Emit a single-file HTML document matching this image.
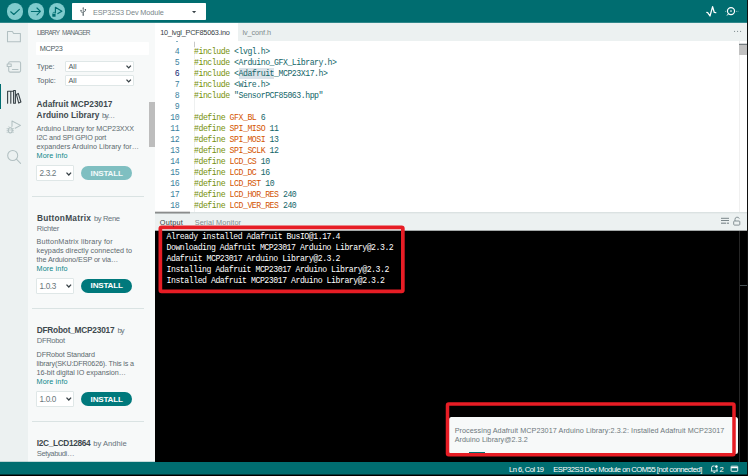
<!DOCTYPE html>
<html>
<head>
<meta charset="utf-8">
<title>Arduino IDE</title>
<style>
*{margin:0;padding:0;box-sizing:border-box;}
html,body{width:748px;height:476px;overflow:hidden;background:#fff;font-family:"Liberation Sans",sans-serif;}
#root{position:relative;width:748px;height:476px;overflow:hidden;}
.t{position:absolute;white-space:pre;}
svg{position:absolute;overflow:visible;}
</style>
</head>
<body>
<div id="root">
<div style="position:absolute;left:0px;top:0px;width:748px;height:23px;background:#006d70;"></div>
<div style="position:absolute;left:0px;top:23px;width:28px;height:439px;background:#ecf1f1;"></div>
<div style="position:absolute;left:28px;top:23px;width:127px;height:439px;background:#f7f9f9;"></div>
<div style="position:absolute;left:155px;top:23px;width:593px;height:18px;background:#ecf1f1;"></div>
<div style="position:absolute;left:155px;top:23px;width:83px;height:18px;background:#fff;"></div>
<div style="position:absolute;left:155px;top:41px;width:593px;height:172px;background:#fff;"></div>
<div style="position:absolute;left:155px;top:213px;width:593px;height:18px;background:#ecf1f1;"></div>
<div style="position:absolute;left:155px;top:212px;width:593px;height:1px;background:#dbe2e2;"></div>
<div style="position:absolute;left:155px;top:213px;width:593px;height:1px;background:#e6ebeb;"></div>
<div style="position:absolute;left:155px;top:212px;width:35px;height:1px;background:#8a8c8c;"></div>
<div style="position:absolute;left:155px;top:213px;width:35px;height:1px;background:#b4b9b9;"></div>
<div style="position:absolute;left:155px;top:211px;width:35px;height:1px;background:#d9dada;"></div>
<div style="position:absolute;left:155px;top:230px;width:593px;height:1px;background:#a4a8a8;"></div>
<div style="position:absolute;left:155px;top:231px;width:593px;height:231px;background:#000;"></div>
<div style="position:absolute;left:0px;top:462px;width:748px;height:14px;background:#006d70;"></div>
<div style="position:absolute;left:0px;top:461px;width:28px;height:1px;background:#bdd3d4;"></div>
<div style="position:absolute;left:28px;top:461px;width:127px;height:1px;background:#c6dadb;"></div>
<div style="position:absolute;left:0px;top:22px;width:748px;height:1px;background:#2f878a;"></div>
<div style="position:absolute;left:6.9px;top:3.4px;width:16.2px;height:16.2px;background:#7fcbcd;border-radius:50%;"></div>
<div style="position:absolute;left:27.85px;top:3.4px;width:16.2px;height:16.2px;background:#7fcbcd;border-radius:50%;"></div>
<div style="position:absolute;left:48.65px;top:3.4px;width:16.2px;height:16.2px;background:#7fcbcd;border-radius:50%;"></div>
<svg style="left:0;top:0" width="70" height="23" viewBox="0 0 70 23" fill="none" stroke="#006d70" stroke-width="1.15" stroke-linecap="round" stroke-linejoin="round"><path d="M10.7 11.8 L13.8 14.5 L19.4 9.4"/><path d="M31.4 11.45 H40.2 M37 8 L40.4 11.45 L37 14.9"/><path d="M55.4 12.6 V7.3 L61.9 11.2 L57.9 13.6"/><rect x="52.3" y="13.9" width="3.3" height="2.9" rx="0.6" fill="#006d70" stroke="none"/><path d="M53 13.9 V13.2 a1 1 0 0 1 2 0 V13.9" stroke-width="0.7"/></svg>
<div style="position:absolute;left:71.6px;top:2.8px;width:134.2px;height:17.2px;background:#fff;border-radius:0.8px;"></div>
<svg style="left:78.6px;top:6px" width="8.8" height="10.56" viewBox="0 0 10 12" fill="none" stroke="#4e5b61" stroke-width="0.85" stroke-linecap="round"><path d="M4.8 2.2 V10.2 M4.8 8.3 L2.3 6.6 V5.2 M4.8 7.2 L7.3 5.6 V4.4"/><path d="M4.8 1.4 L3.9 2.9 H5.7 Z" fill="#4e5b61" stroke="none"/><circle cx="4.8" cy="10.3" r="0.9" fill="#4e5b61" stroke="none"/><circle cx="2.3" cy="4.9" r="0.7" fill="#4e5b61" stroke="none"/><rect x="6.6" y="3.4" width="1.4" height="1.3" fill="#4e5b61" stroke="none"/></svg>
<svg style="left:191.9px;top:10.7px" width="4.2" height="2.5" viewBox="0 0 5 3"><path d="M0 0 H5 L2.5 2.8 Z" fill="#374146"/></svg>
<svg style="left:704px;top:5px" width="40" height="14" viewBox="0 0 40 14" fill="none" stroke="#fff" stroke-width="1" stroke-linecap="round" stroke-linejoin="round"><path d="M2.8 7.4 L3.7 7.6 L6 11 L8.6 1.7 L10.3 7.5 L11.8 7.6" stroke-width="1.25"/><circle cx="27" cy="6.1" r="3.55" stroke-width="1.2"/><path d="M24.3 9 L23.3 10.2" /><circle cx="27" cy="6.1" r="0.8" fill="#fff" stroke="none"/><circle cx="21.8" cy="6.2" r="0.45" fill="#fff" stroke="none"/><circle cx="32.3" cy="6.2" r="0.45" fill="#fff" stroke="none"/><circle cx="34" cy="6.2" r="0.4" fill="#fff" stroke="none"/></svg>
<div style="position:absolute;left:0px;top:84px;width:1.3px;height:25px;background:#006d70;"></div>
<svg style="left:0;top:23px" width="28" height="150" viewBox="0 23 28 150" fill="none" stroke="#b2c0c2" stroke-width="1.05" stroke-linejoin="round" stroke-linecap="round"><path d="M7.5 41.7 V31.4 H12.4 L13.6 33.4 H20.4 V41.7 Z"/><rect x="8.7" y="61.7" width="11.9" height="10.4" rx="1.3"/><rect x="7.2" y="63.9" width="4" height="2.5" fill="#ecf1f1"/><path d="M12.4 69.4 H18"/><g stroke="#374146" stroke-width="1.1"><path d="M7.6 103.2 V91.3 H13.6 M10.8 91.3 V103.2 M13.6 103.2 V90.5 H15.4 V103.2 Z"/><path d="M16.4 94.4 L18.3 93.4 L20.9 102 L18.7 103.1 Z"/></g><path d="M12 126 V121 L20.5 125.4 L15.2 128.3"/><ellipse cx="10.3" cy="130.3" rx="2" ry="2.6"/><path d="M7 128.6 H8.4 M7 130.4 H8.3 M7 132.2 H8.4 M12.2 128.6 H13.6 M12.3 130.4 H13.6 M12.2 132.2 H13.6 M9.4 127.3 L8.9 126.6 M11.2 127.3 L11.7 126.6 M8.6 130 H12" stroke-width="0.7"/><circle cx="12.7" cy="155.5" r="5"/><path d="M16.4 159.2 L20.6 163.4"/></svg>
<div style="position:absolute;left:36.3px;top:42px;width:112.8px;height:13px;background:#fff;border-radius:1px;"></div>
<div style="position:absolute;left:65px;top:61px;width:69.4px;height:10.5px;background:#fff;border:1px solid #dfe7e7;border-radius:1px;"></div>
<svg style="left:126.2px;top:65px" width="5.4" height="4" viewBox="0 0 5.4 4" fill="none" stroke="#374146" stroke-width="1.3"><path d="M0.5 0.6 L2.7 2.9 L4.9 0.6"/></svg>
<div style="position:absolute;left:65px;top:75px;width:69.4px;height:10.5px;background:#fff;border:1px solid #dfe7e7;border-radius:1px;"></div>
<svg style="left:126.2px;top:79px" width="5.4" height="4" viewBox="0 0 5.4 4" fill="none" stroke="#374146" stroke-width="1.3"><path d="M0.5 0.6 L2.7 2.9 L4.9 0.6"/></svg>
<div style="position:absolute;left:148.9px;top:102.2px;width:5.9px;height:44.5px;background:#bdbdbd;"></div>
<div style="position:absolute;left:36.4px;top:165.4px;width:37.2px;height:15.6px;background:#fff;border:1px solid #dfe7e7;border-radius:1px;"></div>
<svg style="left:65.5px;top:171.70000000000002px" width="5.6" height="4" viewBox="0 0 5.6 4" fill="none" stroke="#374146" stroke-width="1.3"><path d="M0.5 0.6 L2.8 3 L5.1 0.6"/></svg>
<div style="position:absolute;left:80.9px;top:166.3px;width:51.3px;height:13.9px;background:#7fbfc1;border-radius:7px;"></div>
<div style="position:absolute;left:32.3px;top:196px;width:112px;height:1px;background:#dae3e3;"></div>
<div style="position:absolute;left:36.4px;top:278.0px;width:37.2px;height:15.6px;background:#fff;border:1px solid #dfe7e7;border-radius:1px;"></div>
<svg style="left:65.5px;top:284.3px" width="5.6" height="4" viewBox="0 0 5.6 4" fill="none" stroke="#374146" stroke-width="1.3"><path d="M0.5 0.6 L2.8 3 L5.1 0.6"/></svg>
<div style="position:absolute;left:80.9px;top:278.9px;width:51.3px;height:13.9px;background:#00797c;border-radius:7px;"></div>
<div style="position:absolute;left:32.3px;top:308px;width:112px;height:1px;background:#dae3e3;"></div>
<div style="position:absolute;left:36.4px;top:391.0px;width:37.2px;height:15.6px;background:#fff;border:1px solid #dfe7e7;border-radius:1px;"></div>
<svg style="left:65.5px;top:397.3px" width="5.6" height="4" viewBox="0 0 5.6 4" fill="none" stroke="#374146" stroke-width="1.3"><path d="M0.5 0.6 L2.8 3 L5.1 0.6"/></svg>
<div style="position:absolute;left:80.9px;top:391.9px;width:51.3px;height:13.9px;background:#00797c;border-radius:7px;"></div>
<div style="position:absolute;left:32.3px;top:421px;width:112px;height:1px;background:#dae3e3;"></div>
<svg style="left:733px;top:30px" width="10" height="3" viewBox="0 0 10 3" fill="#7d898d"><circle cx="1.6" cy="1.4" r="0.55"/><circle cx="4.6" cy="1.4" r="0.55"/><circle cx="7.6" cy="1.4" r="0.55"/></svg>
<div style="position:absolute;left:739px;top:41px;width:1px;height:171px;background:#f0f0f0;"></div>
<div style="position:absolute;left:739px;top:44px;width:8px;height:11px;background:#c1c1c1;"></div>
<div style="position:absolute;left:739px;top:44px;width:8px;height:1px;background:#757d81;"></div>
<div style="position:absolute;left:739px;top:43px;width:8px;height:1px;background:#d6d8d9;"></div>
<div style="position:absolute;left:193.6px;top:41px;width:1px;height:171px;background:#eef0f0;"></div>
<div style="position:absolute;left:194px;top:41.5px;width:1px;height:5px;background:#c8c8c8;"></div>
<div style="position:absolute;left:238.5px;top:68px;width:35.5px;height:10.6px;background:#dbe3e9;"></div>
<div style="position:absolute;left:170px;top:41px;width:12px;height:2px;overflow:hidden"><div style="position:absolute;left:5.6px;top:0.4px;width:2.6px;height:1px;background:#3a7f9e;opacity:.7;border-radius:1px"></div></div>
<svg style="left:720px;top:216px" width="22" height="11" viewBox="720 216 22 11" fill="none" stroke="#6d797e" stroke-width="0.9"><path d="M721 218.3 H729 M721 220.5 H729"/><path d="M721 223.2 H726.1 M726.9 223.2 H729" stroke="#98a2a5" stroke-width="1.6"/><rect x="733.7" y="221" width="6.1" height="4.1" rx="0.8" stroke="#7c888c"/><path d="M735 221 V219.4 a2.2 2.2 0 0 1 4.3 -0.7" stroke="#7c888c"/></svg>
<div style="position:absolute;left:739px;top:231px;width:1px;height:231px;background:#262626;"></div>
<div style="position:absolute;left:740px;top:285px;width:7px;height:1px;background:#465053;"></div>
<svg style="left:0;top:0" width="748" height="476" viewBox="0 0 748 476" fill="none" stroke="#e71d25"><rect x="160.35" y="227.35" width="242.5" height="64" rx="1.2" stroke-width="3.7"/></svg>
<div style="position:absolute;left:448.5px;top:416.8px;width:289.5px;height:37px;background:#f7f9f9;border-radius:2.5px;"></div>
<div style="position:absolute;left:469px;top:452px;width:16px;height:2px;background:#006d70;"></div>
<svg style="left:0;top:0" width="748" height="476" viewBox="0 0 748 476" fill="none" stroke="#e71d25"><rect x="447.5" y="404" width="286.5" height="50.8" rx="1.2" stroke-width="3.5"/></svg>
<svg style="left:709px;top:464px" width="32" height="10" viewBox="0 0 32 10" fill="none" stroke="#fff" stroke-width="0.9" stroke-linejoin="round"><path d="M2.6 6.9 V3.6 a1.6 1.6 0 0 1 1.6 -1.6 H5.6 M8 4.4 V6.9 M1.8 7 H8.8 M4.4 8.4 H6.2"/><circle cx="7.4" cy="2.6" r="1.3" fill="#fff" stroke="none"/><rect x="22.1" y="2.2" width="6.6" height="5.1" rx="0.4"/><path d="M22.1 3.6 H28.7" stroke-width="1.3"/></svg>
<div style="position:absolute;left:0px;top:474px;width:748px;height:1px;background:#003a3c;"></div>
<div style="position:absolute;left:0px;top:475px;width:748px;height:1px;background:#000;"></div>
<div style="position:absolute;left:747px;top:0px;width:1px;height:476px;background:#101010;"></div>
<span class="t" style='left:93.10px;top:9.00px;font-size:7.3px;line-height:8.76px;color:#7a8689;letter-spacing:-0.118px;'>ESP32S3 Dev Module</span>
<span class="t" style='left:36.90px;top:29.00px;font-size:6.5px;line-height:7.8px;color:#5f6b70;letter-spacing:-0.733px;word-spacing:1.6px;'>LIBRARY MANAGER</span>
<span class="t" style='left:39.80px;top:45.00px;font-size:7.3px;line-height:8.76px;color:#4e5b61;letter-spacing:-0.311px;'>MCP23</span>
<span class="t" style='left:36.70px;top:63.00px;font-size:7.3px;line-height:8.76px;color:#56636a;'>Type:</span>
<span class="t" style='left:36.70px;top:77.00px;font-size:7.3px;line-height:8.76px;color:#56636a;'>Topic:</span>
<span class="t" style='left:68.40px;top:63.00px;font-size:7.3px;line-height:8.76px;color:#4e5b61;'>All</span>
<span class="t" style='left:68.40px;top:77.00px;font-size:7.3px;line-height:8.76px;color:#4e5b61;'>All</span>
<span class="t" style='left:36.60px;top:100.00px;font-size:8.3px;line-height:9.96px;color:#3e494e;font-weight:bold;letter-spacing:0.011px;'>Adafruit MCP23017</span>
<span class="t" style='left:36.60px;top:111.00px;font-size:8.3px;line-height:9.96px;color:#3e494e;font-weight:bold;letter-spacing:0.040px;'>Arduino Library</span>
<span class="t" style='left:102.00px;top:111.00px;font-size:7.6px;line-height:9.12px;color:#66727a;letter-spacing:-1.312px;'>by…</span>
<span class="t" style='left:36.60px;top:125.00px;font-size:7.2px;line-height:8.64px;color:#5d696e;letter-spacing:-0.073px;'>Arduino Library for MCP23XXX</span>
<span class="t" style='left:36.60px;top:134.00px;font-size:7.2px;line-height:8.64px;color:#5d696e;letter-spacing:-0.170px;'>I2C and SPI GPIO port</span>
<span class="t" style='left:36.60px;top:143.00px;font-size:7.2px;line-height:8.64px;color:#5d696e;letter-spacing:0.028px;'>expanders Arduino Library for…</span>
<span class="t" style='left:36.60px;top:152.00px;font-size:7.2px;line-height:8.64px;color:#0a8588;letter-spacing:0.129px;'>More info</span>
<span class="t" style='left:39.60px;top:169.00px;font-size:8.2px;line-height:9.84px;color:#6a767b;letter-spacing:-0.380px;'>2.3.2</span>
<span class="t" style='left:90.60px;top:169.00px;font-size:8.1px;line-height:9.72px;color:#f2fafa;font-weight:bold;letter-spacing:-0.213px;'>INSTALL</span>
<span class="t" style='left:37.00px;top:214.00px;font-size:8.3px;line-height:9.96px;color:#3e494e;font-weight:bold;letter-spacing:0.239px;'>ButtonMatrix</span>
<span class="t" style='left:94.00px;top:214.00px;font-size:7.6px;line-height:9.12px;color:#66727a;letter-spacing:-0.383px;'>by Rene</span>
<span class="t" style='left:36.80px;top:224.00px;font-size:7.6px;line-height:9.12px;color:#66727a;letter-spacing:-0.260px;'>Richter</span>
<span class="t" style='left:36.60px;top:238.00px;font-size:7.2px;line-height:8.64px;color:#5d696e;letter-spacing:0.161px;'>ButtonMatrix library for</span>
<span class="t" style='left:36.60px;top:247.00px;font-size:7.2px;line-height:8.64px;color:#5d696e;letter-spacing:0.028px;'>keypads directly connected to</span>
<span class="t" style='left:36.60px;top:256.00px;font-size:7.2px;line-height:8.64px;color:#5d696e;letter-spacing:-0.077px;'>the Arduiono/ESP or via…</span>
<span class="t" style='left:36.60px;top:265.00px;font-size:7.2px;line-height:8.64px;color:#0a8588;letter-spacing:0.129px;'>More info</span>
<span class="t" style='left:39.60px;top:282.00px;font-size:8.2px;line-height:9.84px;color:#6a767b;letter-spacing:-0.380px;'>1.0.3</span>
<span class="t" style='left:90.60px;top:281.00px;font-size:8.1px;line-height:9.72px;color:#fff;font-weight:bold;letter-spacing:-0.213px;'>INSTALL</span>
<span class="t" style='left:36.70px;top:326.00px;font-size:8.3px;line-height:9.96px;color:#3e494e;font-weight:bold;letter-spacing:-0.217px;'>DFRobot_MCP23017</span>
<span class="t" style='left:117.40px;top:326.00px;font-size:7.6px;line-height:9.12px;color:#66727a;letter-spacing:-0.831px;'>by</span>
<span class="t" style='left:36.80px;top:336.00px;font-size:7.6px;line-height:9.12px;color:#66727a;letter-spacing:-0.348px;'>DFRobot</span>
<span class="t" style='left:36.60px;top:351.00px;font-size:7.2px;line-height:8.64px;color:#5d696e;letter-spacing:-0.109px;'>DFRobot Standard</span>
<span class="t" style='left:36.60px;top:360.00px;font-size:7.2px;line-height:8.64px;color:#5d696e;letter-spacing:-0.171px;'>library(SKU:DFR0626). This is a</span>
<span class="t" style='left:36.60px;top:369.00px;font-size:7.2px;line-height:8.64px;color:#5d696e;letter-spacing:-0.037px;'>16-bit digital IO expansion…</span>
<span class="t" style='left:36.60px;top:378.00px;font-size:7.2px;line-height:8.64px;color:#0a8588;letter-spacing:0.129px;'>More info</span>
<span class="t" style='left:39.60px;top:395.00px;font-size:8.2px;line-height:9.84px;color:#6a767b;letter-spacing:-0.380px;'>1.0.0</span>
<span class="t" style='left:90.60px;top:395.00px;font-size:8.1px;line-height:9.72px;color:#fff;font-weight:bold;letter-spacing:-0.213px;'>INSTALL</span>
<span class="t" style='left:36.80px;top:439.00px;font-size:8.3px;line-height:9.96px;color:#3e494e;font-weight:bold;letter-spacing:-0.351px;'>I2C_LCD12864</span>
<span class="t" style='left:93.30px;top:439.00px;font-size:7.6px;line-height:9.12px;color:#66727a;letter-spacing:0.005px;'>by Andhie</span>
<span class="t" style='left:36.80px;top:449.00px;font-size:7.6px;line-height:9.12px;color:#66727a;letter-spacing:-0.408px;'>Setyabudi…</span>
<span class="t" style='left:160.20px;top:29.00px;font-size:7.3px;line-height:8.76px;color:#374146;letter-spacing:-0.223px;'>10_lvgl_PCF85063.ino</span>
<span class="t" style='left:242.40px;top:29.00px;font-size:7.3px;line-height:8.76px;color:#7f8c8d;letter-spacing:-0.077px;'>lv_conf.h</span>
<span class="t" style='left:174.74px;top:47.00px;font-size:8.2px;line-height:9.84px;color:#3a7f9e;font-family:"Liberation Mono",monospace;letter-spacing:-0.466px;'>4</span>
<span class="t" style='left:194.00px;top:47.00px;font-size:8.2px;line-height:9.84px;color:#136669;font-family:"Liberation Mono",monospace;letter-spacing:-0.466px;'><span style="color:#758f08">#include</span><span style="color:#136669"> &lt;lvgl.h&gt;</span></span>
<span class="t" style='left:174.74px;top:58.00px;font-size:8.2px;line-height:9.84px;color:#3a7f9e;font-family:"Liberation Mono",monospace;letter-spacing:-0.466px;'>5</span>
<span class="t" style='left:194.00px;top:58.00px;font-size:8.2px;line-height:9.84px;color:#136669;font-family:"Liberation Mono",monospace;letter-spacing:-0.466px;'><span style="color:#758f08">#include</span><span style="color:#136669"> &lt;Arduino_GFX_Library.h&gt;</span></span>
<span class="t" style='left:174.74px;top:69.00px;font-size:8.2px;line-height:9.84px;color:#0b216f;font-family:"Liberation Mono",monospace;letter-spacing:-0.466px;'>6</span>
<span class="t" style='left:194.00px;top:69.00px;font-size:8.2px;line-height:9.84px;color:#136669;font-family:"Liberation Mono",monospace;letter-spacing:-0.466px;'><span style="color:#758f08">#include</span><span style="color:#136669"> &lt;Adafruit_MCP23X17.h&gt;</span></span>
<span class="t" style='left:174.74px;top:80.00px;font-size:8.2px;line-height:9.84px;color:#3a7f9e;font-family:"Liberation Mono",monospace;letter-spacing:-0.466px;'>7</span>
<span class="t" style='left:194.00px;top:80.00px;font-size:8.2px;line-height:9.84px;color:#136669;font-family:"Liberation Mono",monospace;letter-spacing:-0.466px;'><span style="color:#758f08">#include</span><span style="color:#136669"> &lt;Wire.h&gt;</span></span>
<span class="t" style='left:174.74px;top:91.00px;font-size:8.2px;line-height:9.84px;color:#3a7f9e;font-family:"Liberation Mono",monospace;letter-spacing:-0.466px;'>8</span>
<span class="t" style='left:194.00px;top:91.00px;font-size:8.2px;line-height:9.84px;color:#136669;font-family:"Liberation Mono",monospace;letter-spacing:-0.466px;'><span style="color:#758f08">#include</span><span style="color:#136669"> &quot;SensorPCF85063.hpp&quot;</span></span>
<span class="t" style='left:174.74px;top:102.00px;font-size:8.2px;line-height:9.84px;color:#3a7f9e;font-family:"Liberation Mono",monospace;letter-spacing:-0.466px;'>9</span>
<span class="t" style='left:170.29px;top:113.00px;font-size:8.2px;line-height:9.84px;color:#3a7f9e;font-family:"Liberation Mono",monospace;letter-spacing:-0.466px;'>10</span>
<span class="t" style='left:194.00px;top:113.00px;font-size:8.2px;line-height:9.84px;color:#136669;font-family:"Liberation Mono",monospace;letter-spacing:-0.466px;'><span style="color:#758f08">#define</span><span style="color:#d35400"> GFX_BL</span><span style="color:#136669"> 6</span></span>
<span class="t" style='left:170.29px;top:124.00px;font-size:8.2px;line-height:9.84px;color:#3a7f9e;font-family:"Liberation Mono",monospace;letter-spacing:-0.466px;'>11</span>
<span class="t" style='left:194.00px;top:124.00px;font-size:8.2px;line-height:9.84px;color:#136669;font-family:"Liberation Mono",monospace;letter-spacing:-0.466px;'><span style="color:#758f08">#define</span><span style="color:#d35400"> SPI_MISO</span><span style="color:#136669"> 11</span></span>
<span class="t" style='left:170.29px;top:135.00px;font-size:8.2px;line-height:9.84px;color:#3a7f9e;font-family:"Liberation Mono",monospace;letter-spacing:-0.466px;'>12</span>
<span class="t" style='left:194.00px;top:135.00px;font-size:8.2px;line-height:9.84px;color:#136669;font-family:"Liberation Mono",monospace;letter-spacing:-0.466px;'><span style="color:#758f08">#define</span><span style="color:#d35400"> SPI_MOSI</span><span style="color:#136669"> 13</span></span>
<span class="t" style='left:170.29px;top:146.00px;font-size:8.2px;line-height:9.84px;color:#3a7f9e;font-family:"Liberation Mono",monospace;letter-spacing:-0.466px;'>13</span>
<span class="t" style='left:194.00px;top:146.00px;font-size:8.2px;line-height:9.84px;color:#136669;font-family:"Liberation Mono",monospace;letter-spacing:-0.466px;'><span style="color:#758f08">#define</span><span style="color:#d35400"> SPI_SCLK</span><span style="color:#136669"> 12</span></span>
<span class="t" style='left:170.29px;top:157.00px;font-size:8.2px;line-height:9.84px;color:#3a7f9e;font-family:"Liberation Mono",monospace;letter-spacing:-0.466px;'>14</span>
<span class="t" style='left:194.00px;top:157.00px;font-size:8.2px;line-height:9.84px;color:#136669;font-family:"Liberation Mono",monospace;letter-spacing:-0.466px;'><span style="color:#758f08">#define</span><span style="color:#d35400"> LCD_CS</span><span style="color:#136669"> 10</span></span>
<span class="t" style='left:170.29px;top:168.00px;font-size:8.2px;line-height:9.84px;color:#3a7f9e;font-family:"Liberation Mono",monospace;letter-spacing:-0.466px;'>15</span>
<span class="t" style='left:194.00px;top:168.00px;font-size:8.2px;line-height:9.84px;color:#136669;font-family:"Liberation Mono",monospace;letter-spacing:-0.466px;'><span style="color:#758f08">#define</span><span style="color:#d35400"> LCD_DC</span><span style="color:#136669"> 16</span></span>
<span class="t" style='left:170.29px;top:179.00px;font-size:8.2px;line-height:9.84px;color:#3a7f9e;font-family:"Liberation Mono",monospace;letter-spacing:-0.466px;'>16</span>
<span class="t" style='left:194.00px;top:179.00px;font-size:8.2px;line-height:9.84px;color:#136669;font-family:"Liberation Mono",monospace;letter-spacing:-0.466px;'><span style="color:#758f08">#define</span><span style="color:#d35400"> LCD_RST</span><span style="color:#136669"> 10</span></span>
<span class="t" style='left:170.29px;top:190.00px;font-size:8.2px;line-height:9.84px;color:#3a7f9e;font-family:"Liberation Mono",monospace;letter-spacing:-0.466px;'>17</span>
<span class="t" style='left:194.00px;top:190.00px;font-size:8.2px;line-height:9.84px;color:#136669;font-family:"Liberation Mono",monospace;letter-spacing:-0.466px;'><span style="color:#758f08">#define</span><span style="color:#d35400"> LCD_HOR_RES</span><span style="color:#136669"> 240</span></span>
<span class="t" style='left:170.29px;top:201.00px;font-size:8.2px;line-height:9.84px;color:#3a7f9e;font-family:"Liberation Mono",monospace;letter-spacing:-0.466px;'>18</span>
<span class="t" style='left:194.00px;top:201.00px;font-size:8.2px;line-height:9.84px;color:#136669;font-family:"Liberation Mono",monospace;letter-spacing:-0.466px;'><span style="color:#758f08">#define</span><span style="color:#d35400"> LCD_VER_RES</span><span style="color:#136669"> 240</span></span>
<span class="t" style='left:159.80px;top:219.00px;font-size:7.3px;line-height:8.76px;color:#374146;letter-spacing:0.199px;'>Output</span>
<span class="t" style='left:194.70px;top:219.00px;font-size:7.3px;line-height:8.76px;color:#7f8c8d;letter-spacing:0.099px;'>Serial Monitor</span>
<span class="t" style='left:166.50px;top:232.00px;font-size:8.2px;line-height:9.84px;color:#fff;font-family:"Liberation Mono",monospace;letter-spacing:-0.466px;'>Already installed Adafruit BusIO@1.17.4</span>
<span class="t" style='left:166.50px;top:243.00px;font-size:8.2px;line-height:9.84px;color:#fff;font-family:"Liberation Mono",monospace;letter-spacing:-0.466px;'>Downloading Adafruit MCP23017 Arduino Library@2.3.2</span>
<span class="t" style='left:166.50px;top:254.00px;font-size:8.2px;line-height:9.84px;color:#fff;font-family:"Liberation Mono",monospace;letter-spacing:-0.466px;'>Adafruit MCP23017 Arduino Library@2.3.2</span>
<span class="t" style='left:166.50px;top:265.00px;font-size:8.2px;line-height:9.84px;color:#fff;font-family:"Liberation Mono",monospace;letter-spacing:-0.466px;'>Installing Adafruit MCP23017 Arduino Library@2.3.2</span>
<span class="t" style='left:166.50px;top:276.00px;font-size:8.2px;line-height:9.84px;color:#fff;font-family:"Liberation Mono",monospace;letter-spacing:-0.466px;'>Installed Adafruit MCP23017 Arduino Library@2.3.2</span>
<span class="t" style='left:454.70px;top:427.00px;font-size:7.2px;line-height:8.64px;color:#6d787c;letter-spacing:0.081px;'>Processing Adafruit MCP23017 Arduino Library:2.3.2: Installed Adafruit MCP23017</span>
<span class="t" style='left:454.70px;top:436.00px;font-size:7.2px;line-height:8.64px;color:#6d787c;letter-spacing:0.053px;'>Arduino Library@2.3.2</span>
<span class="t" style='left:509.00px;top:465.00px;font-size:7.6px;line-height:9.12px;color:#fff;letter-spacing:-0.532px;'>Ln 6, Col 19</span>
<span class="t" style='left:553.20px;top:465.00px;font-size:7.6px;line-height:9.12px;color:#fff;letter-spacing:-0.458px;'>ESP32S3 Dev Module on COM55 [not connected]</span>
<span class="t" style='left:719.60px;top:465.00px;font-size:7.6px;line-height:9.12px;color:#fff;'>2</span>
</div>
</body>
</html>
